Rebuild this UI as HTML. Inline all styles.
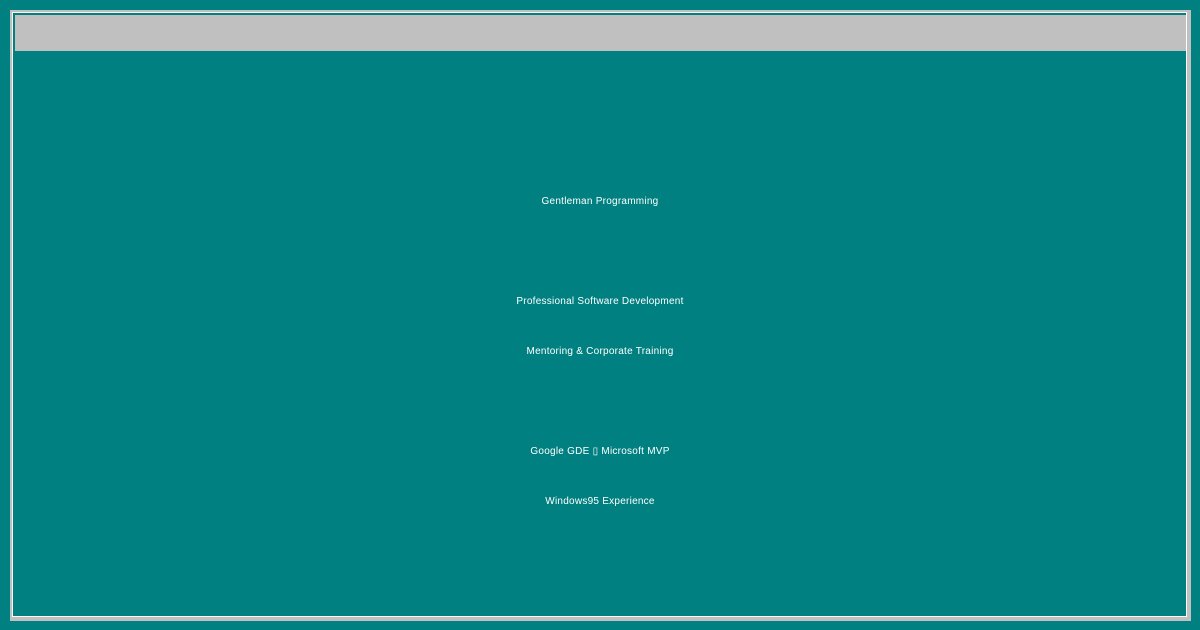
<!DOCTYPE html>
<html><head><style>
body{margin:0;width:1200px;height:630px;background:#008080;position:relative;overflow:hidden;font-family:"Liberation Sans",sans-serif;}
.outer{position:absolute;left:10px;top:10px;width:1181px;height:611px;background:#c0c0c0;}
.inner{position:absolute;left:12px;top:12px;width:1175px;height:605px;border:1px solid #fff;background:#008080;box-sizing:border-box;}
.title{position:absolute;left:15px;top:15px;width:1171px;height:36px;background:#c0c0c0;}
.t{position:absolute;left:0;width:1200px;text-align:center;color:#fff;font-size:10px;line-height:12px;letter-spacing:0.25px;}
</style></head><body>
<div class="outer"></div>
<div class="inner"></div>
<div class="title"></div>
<div class="t" style="top:196px">Gentleman Programming</div>
<div class="t" style="top:296px">Professional Software Development</div>
<div class="t" style="top:346px">Mentoring &amp; Corporate Training</div>
<div class="t" style="top:446px">Google GDE ▯ Microsoft MVP</div>
<div class="t" style="top:496px">Windows95 Experience</div>
</body></html>
